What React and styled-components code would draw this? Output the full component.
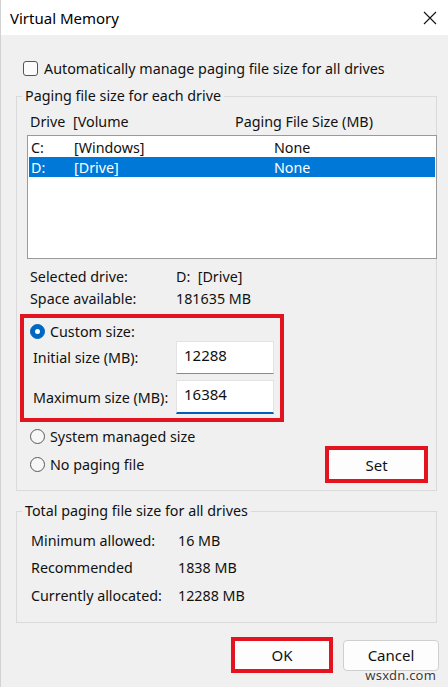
import React from 'react';
import styled, { createGlobalStyle } from 'styled-components';

const GlobalStyle = createGlobalStyle`
	html, body {
		margin: 0;
		padding: 0;
		background: #f0f0f0;
	}
	body {
		font-family: "Segoe UI", "Noto Sans", "Open Sans", sans-serif;
		font-size: 14.3px;
		color: #111;
	}
`;

const Window = styled.div`
	position: relative;
	width: 448px;
	height: 687px;
	box-sizing: border-box;
	background: #f0f0f0;
	border-left: 1px solid #d2d2d2;
	overflow: hidden;
	display: flex;
	flex-direction: column;
`;

const TitleBar = styled.div`
	height: 35px;
	background: #fff;
	display: flex;
	align-items: center;
	justify-content: space-between;
	padding: 0 11px 0 9px;
	font-size: 15px;
	color: #000;
`;

const CloseIcon = () => (
	<svg width="14" height="14" viewBox="0 0 14 14">
		<path d="M1 1 L13 13 M13 1 L1 13" stroke="#111" strokeWidth="1.1" fill="none" />
	</svg>
);

const Body = styled.div`
	padding: 0 11px 0 15px;
	display: flex;
	flex-direction: column;
`;

const CheckRow = styled.label`
	display: flex;
	align-items: center;
	gap: 6px;
	height: 20px;
	margin: 23px 0 8px 7px;
`;

const CheckBox = styled.span`
	width: 13px;
	height: 13px;
	border: 1px solid #555;
	border-radius: 3px;
	background: #fbfbfb;
`;

const Group = styled.fieldset`
	margin: ${p => p.$top || 0}px 0 0 0;
	padding: ${p => p.$pad};
	border: 1px solid #dadada;
	min-width: 0;
	display: flex;
	flex-direction: column;
`;

const Legend = styled.legend`
	padding: 0 3px;
	margin-left: 5px;
	line-height: 20px;
`;

const Columns = styled.div`
	display: grid;
	grid-template-columns: ${p => p.$cols};
	align-items: center;
	height: ${p => p.$h || 20}px;
	padding-left: ${p => p.$indent || 0}px;
	margin-top: ${p => p.$top || 0}px;
	white-space: nowrap;
`;

const ListBox = styled.div`
	margin: 4px -1px 0 10px;
	border: 1px solid #9a9a9a;
	background: #fff;
	padding: 1px;
	box-sizing: content-box;
	height: 120px;
`;

const ListRow = styled.div`
	display: grid;
	grid-template-columns: 43px 200px 1fr;
	align-items: center;
	height: 20px;
	padding-left: 2px;
	background: ${p => (p.$selected ? '#0078d7' : 'transparent')};
	color: ${p => (p.$selected ? '#fff' : '#111')};
`;

const InfoBlock = styled.div`
	margin-top: 6px;
`;

const Highlight = styled.div`
	border: 4px solid #e3141f;
	margin: ${p => p.$margin || 0};
	display: flex;
	flex-direction: column;
`;

const CustomBox = styled(Highlight)`
	width: 256px;
	padding: 3px 0 4px 0;
`;

const RadioRow = styled.label`
	display: flex;
	align-items: center;
	gap: 5px;
	height: 20px;
	padding-left: ${p => p.$indent || 0}px;
`;

const Radio = styled.span`
	width: 13px;
	height: 13px;
	border-radius: 50%;
	border: 1px solid ${p => (p.$checked ? '#0067c0' : '#5a5a5a')};
	background: ${p => (p.$checked ? '#0067c0' : '#f7f7f7')};
	display: flex;
	align-items: center;
	justify-content: center;
	&::after {
		content: '';
		width: 5px;
		height: 5px;
		border-radius: 50%;
		background: ${p => (p.$checked ? '#fff' : 'transparent')};
	}
`;

const SizeRow = styled.div`
	display: flex;
	align-items: center;
	padding-left: 9px;
	margin-top: ${p => p.$top || 0}px;
`;

const SizeLabel = styled.span`
	width: 143px;
`;

const SizeInput = styled.div`
	width: 96px;
	height: 31px;
	background: #fff;
	border: 1px solid #e3e3e3;
	border-bottom: ${p => (p.$focused ? '2px solid #005fb8' : '1px solid #8a8a8a')};
	box-sizing: content-box;
	display: flex;
	align-items: flex-start;
	& span {
		margin: 3px 0 0 7px;
		font-size: 15px;
	}
`;

const ChoiceArea = styled.div`
	margin-top: 4px;
	display: flex;
	flex-direction: column;
`;

const SetRow = styled.div`
	display: flex;
	align-items: center;
	justify-content: space-between;
	padding-right: 8px;
`;

const Button = styled.div`
	width: ${p => p.$w}px;
	height: ${p => p.$h}px;
	box-sizing: border-box;
	display: flex;
	align-items: center;
	justify-content: center;
	background: #fdfdfd;
	border: ${p => (p.$marked ? '4px solid #e3141f' : '1px solid #cfcfcf')};
	border-radius: ${p => (p.$marked ? 0 : 4)}px;
	font-size: 15px;
	color: #111;
`;

const ButtonBar = styled.div`
	margin: 14px -2px 0 0;
	display: flex;
	justify-content: flex-end;
	align-items: center;
	gap: 10px;
`;

const Watermark = styled.div`
	position: absolute;
	right: 12px;
	bottom: 3px;
	font-size: 13px;
	color: #3a3a3a;
	text-shadow: 0 0 2px #fff, 0 0 2px #fff;
	letter-spacing: 0.2px;
`;

const totals = [
	['Minimum allowed:', '16 MB'],
	['Recommended', '1838 MB'],
	['Currently allocated:', '12288 MB'],
];

export default function App() {
	return (
		<>
			<GlobalStyle />
			<Window>
				<TitleBar>
					<span>Virtual Memory</span>
					<CloseIcon />
				</TitleBar>
				<Body>
					<CheckRow>
						<CheckBox />
						Automatically manage paging file size for all drives
					</CheckRow>

					<Group $pad="5px 0 7px 0">
						<Legend>Paging file size for each drive</Legend>
						<Columns $cols="43px 162px 1fr" $indent={13}>
							<span>Drive</span>
							<span>[Volume</span>
							<span>Paging File Size (MB)</span>
						</Columns>
						<ListBox>
							<ListRow>
								<span>C:</span>
								<span>[Windows]</span>
								<span>None</span>
							</ListRow>
							<ListRow $selected>
								<span>D:</span>
								<span>[Drive]</span>
								<span>None</span>
							</ListRow>
						</ListBox>
						<InfoBlock>
							<Columns $cols="146px 1fr" $indent={13} $h={22}>
								<span>Selected drive:</span>
								<span>D:&nbsp;&nbsp;[Drive]</span>
							</Columns>
							<Columns $cols="146px 1fr" $indent={13} $h={22}>
								<span>Space available:</span>
								<span>181635 MB</span>
							</Columns>
						</InfoBlock>

						<CustomBox $margin="5px 0 0 3px">
							<RadioRow $indent={6}>
								<Radio $checked />
								Custom size:
							</RadioRow>
							<SizeRow>
								<SizeLabel>Initial size (MB):</SizeLabel>
								<SizeInput><span>12288</span></SizeInput>
							</SizeRow>
							<SizeRow $top={6}>
								<SizeLabel>Maximum size (MB):</SizeLabel>
								<SizeInput $focused><span>16384</span></SizeInput>
							</SizeRow>
						</CustomBox>

						<ChoiceArea>
							<RadioRow $indent={13}>
								<Radio />
								System managed size
							</RadioRow>
							<SetRow>
								<RadioRow $indent={13}>
									<Radio />
									No paging file
								</RadioRow>
								<Button $marked $w={103} $h={37}>Set</Button>
							</SetRow>
						</ChoiceArea>
					</Group>

					<Group $top={10} $pad="9px 0 17px 0">
						<Legend>Total paging file size for all drives</Legend>
						{totals.map(([label, value], i) => (
							<Columns key={label} $cols="147px 1fr" $indent={14} $top={i ? 7.5 : 0}>
								<span>{label}</span>
								<span>{value}</span>
							</Columns>
						))}
					</Group>

					<ButtonBar>
						<Button $marked $w={102} $h={36}>OK</Button>
						<Button $w={96} $h={31}>Cancel</Button>
					</ButtonBar>
				</Body>
				<Watermark>wsxdn.com</Watermark>
			</Window>
		</>
	);
}
